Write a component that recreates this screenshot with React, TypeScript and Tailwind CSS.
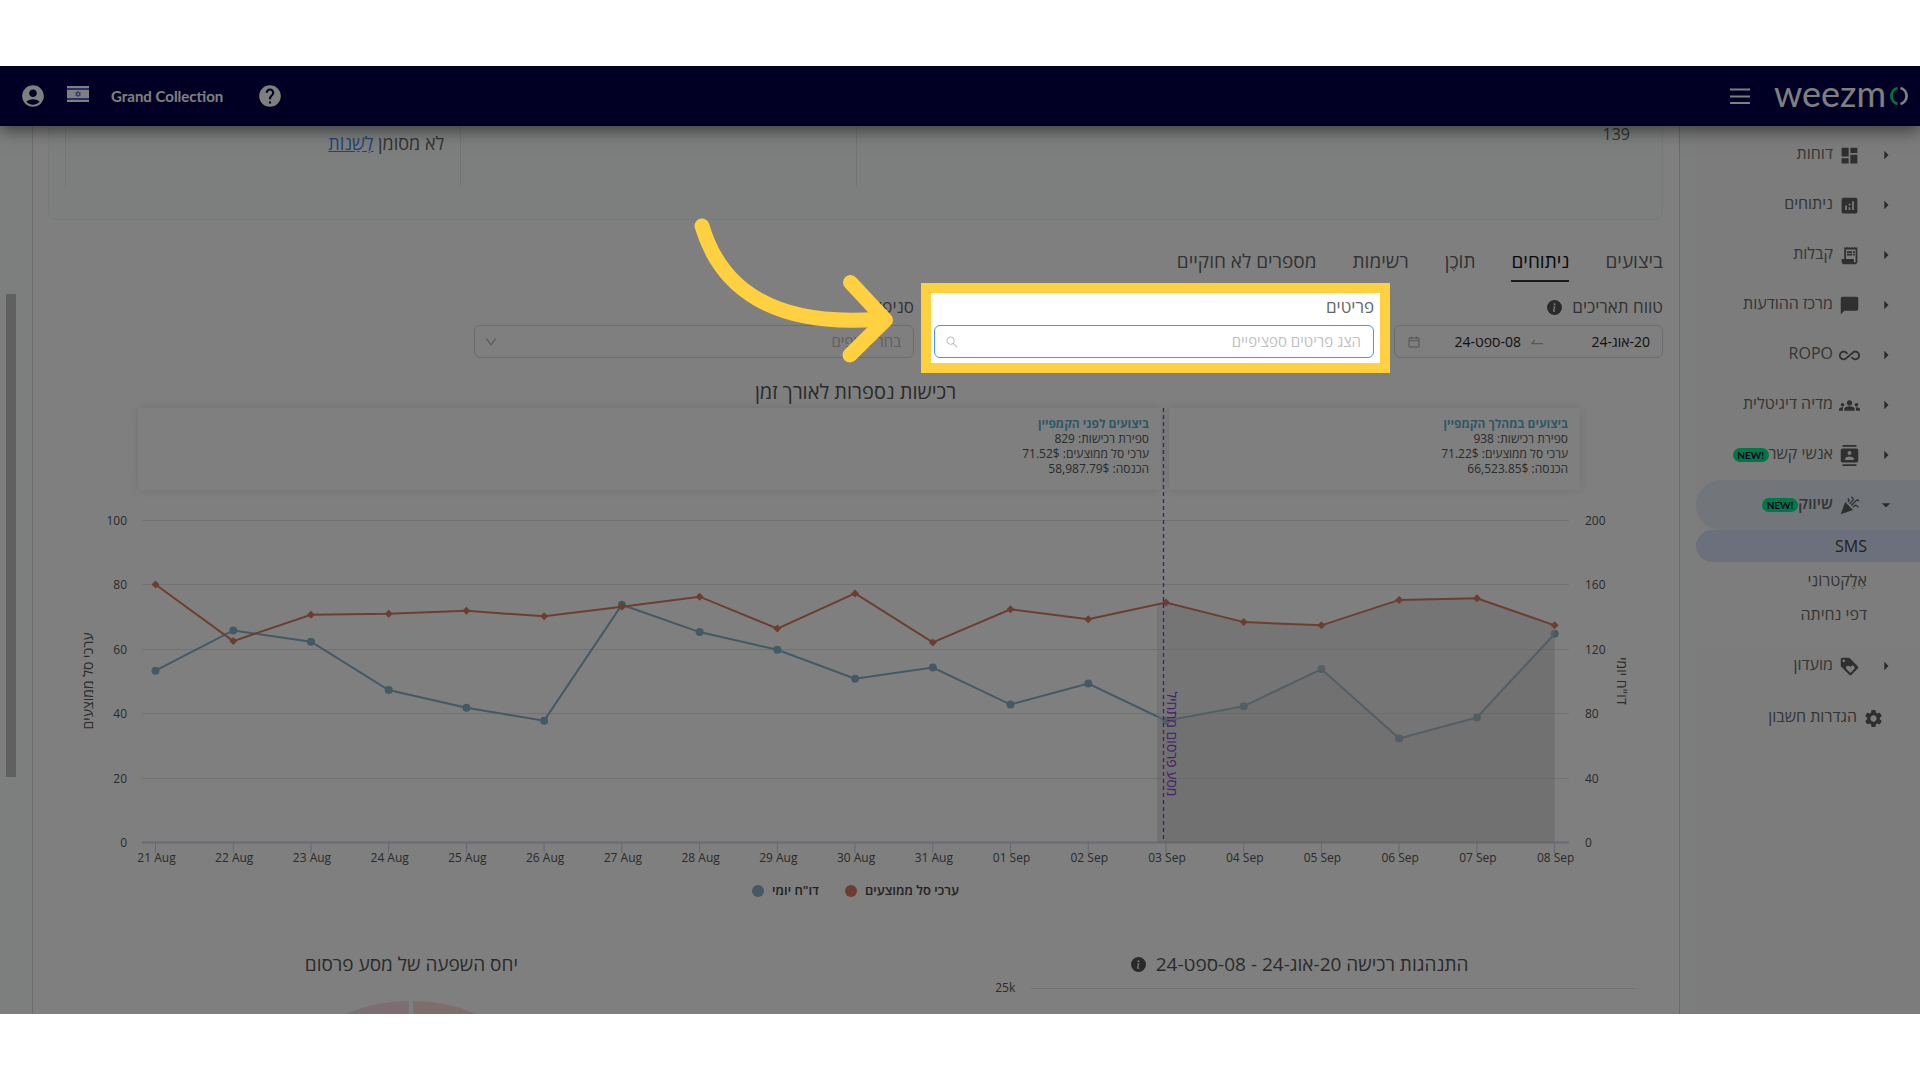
import React from "react";
import {
  MdAccountCircle,
  MdAllInclusive,
  MdAnalytics,
  MdArrowDropDown,
  MdArrowRight,
  MdCelebration,
  MdChatBubble,
  MdContacts,
  MdDashboard,
  MdGroups,
  MdHelp,
  MdLoyalty,
  MdReceiptLong,
  MdSettings,
} from "react-icons/md";
import { AiOutlineCalendar, AiOutlineDown, AiOutlineSearch, AiOutlineSwapRight } from "react-icons/ai";
import { BsInfoCircleFill } from "react-icons/bs";

const menu = [
  { label: "דוחות", icon: MdDashboard },
  { label: "ניתוחים", icon: MdAnalytics },
  { label: "קבלות", icon: MdReceiptLong },
  { label: "מרכז ההודעות", icon: MdChatBubble },
  { label: "ROPO", icon: MdAllInclusive },
  { label: "מדיה דיגיטלית", icon: MdGroups },
  { label: "אנשי קשר", icon: MdContacts, isNew: true },
  { label: "שיווק", icon: MdCelebration, isNew: true, open: true },
  { label: "מועדון", icon: MdLoyalty },
];

const subMenu = [
  { label: "SMS", active: true },
  { label: "אֶלֶקטרוֹנִי" },
  { label: "דפי נחיתה" },
];

const tabs = ["ביצועים", "ניתוחים", "תוֹכֶן", "רשימות", "מספרים לא חוקיים"];

const days = [
  { day: "21 Aug", basket: 80.3, count: 107 },
  { day: "22 Aug", basket: 62.7, count: 132 },
  { day: "23 Aug", basket: 70.9, count: 125 },
  { day: "24 Aug", basket: 71.2, count: 95 },
  { day: "25 Aug", basket: 72.1, count: 84 },
  { day: "26 Aug", basket: 70.4, count: 76 },
  { day: "27 Aug", basket: 73.4, count: 148 },
  { day: "28 Aug", basket: 76.5, count: 131 },
  { day: "29 Aug", basket: 66.6, count: 120 },
  { day: "30 Aug", basket: 77.5, count: 102 },
  { day: "31 Aug", basket: 62.3, count: 109 },
  { day: "01 Sep", basket: 72.6, count: 86 },
  { day: "02 Sep", basket: 69.5, count: 99 },
  { day: "03 Sep", basket: 74.7, count: 76 },
  { day: "04 Sep", basket: 68.6, count: 85 },
  { day: "05 Sep", basket: 67.6, count: 108 },
  { day: "06 Sep", basket: 75.5, count: 65 },
  { day: "07 Sep", basket: 76, count: 78 },
  { day: "08 Sep", basket: 67.6, count: 130 },
];

const CAMPAIGN_START = 13;
const BASE_Y = 353;
const dayX = (i: number) => 107.5 + i * 77.73;
const basketY = (v: number) => BASE_Y - v * 3.22;
const countY = (v: number) => BASE_Y - v * 1.61;

const basketPoints = days.map((d, i) => `${dayX(i)},${basketY(d.basket)}`);
const countPoints = days.map((d, i) => `${dayX(i)},${countY(d.count)}`);

// the shaded part starts a little before the first campaign day
const shade = (points: string[], firstY: number) =>
  `1109,${BASE_Y} 1109,${firstY} ${points.slice(CAMPAIGN_START).join(" ")} ${dayX(18)},${BASE_Y}`;

function NewBadge() {
  return (
    <span className="flex h-3.5 w-9 items-center justify-center rounded-full bg-[#00f08a] font-['Lato',sans-serif] text-[10px] font-bold text-[#06004a]" dir="ltr">
      NEW!
    </span>
  );
}

function Header() {
  return (
    <header dir="ltr" className="relative z-10 flex h-[60px] shrink-0 items-center justify-between bg-[#030048] pr-2.5 pl-5 text-white shadow-[0_4px_16px_rgba(0,0,0,0.55)]">
      <div className="flex items-center">
        <button aria-label="חשבון">
          <MdAccountCircle className="size-[26px]" />
        </button>
        <svg viewBox="0 0 22 16" className="ml-[21px] mb-1 h-4 w-[22px]">
          <rect width="22" height="16" fill="#fff" />
          <rect y="2" width="22" height="2" fill="#4a5fd8" />
          <rect y="12" width="22" height="2" fill="#4a5fd8" />
          <path d="M11 5.2 13.4 9.3H8.6ZM11 10.8 8.6 6.7h4.8Z" fill="none" stroke="#4a5fd8" strokeWidth="0.8" />
        </svg>
        <span className="ml-[22px] font-['Lato',sans-serif] text-[15px] font-bold">Grand Collection</span>
        <button aria-label="עזרה" className="ml-[34px]">
          <MdHelp className="size-[26px]" />
        </button>
      </div>
      <div className="flex items-center">
        <button aria-label="תפריט">
          <svg viewBox="0 0 20 16" className="h-4 w-5" stroke="currentColor" strokeWidth="1.8">
            <path d="M0 1.5h20M0 8.5h20M0 15h20" />
          </svg>
        </button>
        <a href="#home" className="ml-6 flex items-center">
          <span className="mb-1.5 font-['Lato',sans-serif] text-[36px] leading-9">weezm</span>
          <svg viewBox="0 0 20 18" className="ml-0.5 h-[18px] w-[22px] overflow-visible" fill="none" strokeWidth="2.8">
            <path d="M8.500 1A8.3 8.3 0 0 0 8.500 17" stroke="#00e887" />
            <path d="M11.500 1A8.3 8.3 0 0 1 11.500 17" stroke="currentColor" />
          </svg>
        </a>
      </div>
    </header>
  );
}

function Sidebar() {
  return (
    <aside className="w-[241px] shrink-0 border-l border-[#d0d6d4] bg-[#f8fcfa] text-base text-[#6b6b6b]">
      <nav className="me-4 h-full bg-[#f8f8f8] pt-1">
        {menu.map((item) => (
          <div key={item.label}>
            <button
              className={`flex h-[50px] w-full items-center ps-6 ${item.open ? "rounded-l-full bg-[#e4eaf5] font-semibold" : ""}`}
            >
              {item.open ? <MdArrowDropDown className="size-5 text-[#555]" /> : <MdArrowRight className="size-5 text-[#555]" />}
              <item.icon className="ms-4 size-[21px] text-[#5e5e5e]" />
              <span className="ms-1.5 mb-1">{item.label}</span>
              {item.isNew && <NewBadge />}
            </button>
            {item.open && (
              <div className="flex flex-col gap-0.5 bg-[#fbfbfb] pb-[11px]">
                {subMenu.map((sub) => (
                  <a
                    key={sub.label}
                    href="#sub"
                    className={`flex h-8 items-center ps-[53px] ${sub.active ? "rounded-l-full bg-[#d8e0f8] text-[#444]" : ""}`}
                  >
                    {sub.label}
                  </a>
                ))}
              </div>
            )}
          </div>
        ))}
        <button className="mt-0.5 flex h-[50px] w-full items-center ps-9">
          <MdSettings className="size-[21px] text-[#5e5e5e]" />
          <span className="ms-1.5 mb-1">הגדרות חשבון</span>
        </button>
      </nav>
    </aside>
  );
}

function Filters() {
  return (
    <div className="mt-[11px] grid grid-cols-[269fr_440fr_440fr_406fr] gap-5">
      <div>
        <label htmlFor="from" className="flex h-7 items-center gap-2.5 text-[17px] text-[#666]">
          טווח תאריכים
          <BsInfoCircleFill className="size-[15px] text-[#555]" />
        </label>
        <div className="mt-1 flex h-[33px] items-center rounded-md border border-[#d9d9d9] px-3 text-sm text-[#222]">
          <input id="from" defaultValue="20-אוג-24" className="w-[105px] outline-none" />
          <AiOutlineSwapRight className="size-4 shrink-0 -scale-x-100 text-[#aaa]" />
          <input aria-label="עד תאריך" defaultValue="08-ספט-24" className="ms-2 w-0 flex-1 outline-none" />
          <AiOutlineCalendar className="size-3.5 text-[#aaa]" />
        </div>
      </div>

      <div className="relative">
        <label htmlFor="items" className="flex h-7 items-center text-[17px] text-[#666]">פריטים</label>
        <div className="mt-1 flex h-[33px] items-center rounded-md border border-[#4a90ff] ps-3 pe-2.5">
          <input id="items" placeholder="הצג פריטים ספציפיים" className="w-0 flex-1 text-[15px] outline-none placeholder:text-[#bfbfbf]" />
          <AiOutlineSearch className="size-3.5 text-[#bfbfbf]" />
        </div>
        <Spotlight />
      </div>

      <div>
        <label htmlFor="branches" className="flex h-7 items-center text-[17px] text-[#666]">סניפים</label>
        <div className="relative mt-1">
          <select id="branches" className="h-[33px] w-full appearance-none rounded-md border border-[#d9d9d9] px-3 text-[15px] text-[#bfbfbf]">
            <option>בחר סניפים</option>
          </select>
          <AiOutlineDown className="pointer-events-none absolute top-2.5 left-2.5 size-3.5 text-[#aaa]" />
        </div>
      </div>
    </div>
  );
}

// dims everything around the focused field and points at it
function Spotlight() {
  return (
    <div className="pointer-events-none absolute -top-2.5 -right-4 -bottom-[15px] -left-[13px] z-50 border-10 border-[#ffd140] shadow-[0_0_0_3000px_rgba(0,0,0,0.5)]">
      <svg
        viewBox="693 217 200 150"
        className="absolute -top-[76px] right-[calc(100%+38px)] h-[150px] w-[200px]"
        fill="none"
        stroke="#ffd140"
        strokeWidth="15"
        strokeLinecap="round"
        strokeLinejoin="round"
      >
        <path d="M702 226C720 287 772 328 880 319" />
        <path d="M850.500 282.500 885.500 320 850 355" />
      </svg>
    </div>
  );
}

function Summary({ title, count, basket, income }: { title: string; count: string; basket: string; income: string }) {
  return (
    <div className="h-[82px] bg-white px-3 pt-2 text-xs leading-[15px] text-[#555] shadow-[0_0_10px_rgba(0,0,0,0.12)]">
      <p className="font-bold text-[#5cb0cf]">{title}</p>
      <p>ספירת רכישות: {count}</p>
      <p>ערכי סל ממוצעים: {basket}</p>
      <p>הכנסה: {income}</p>
    </div>
  );
}

function PurchasesChart() {
  return (
    <section>
      <h2 className="mt-5 flex h-7 items-center justify-center text-xl text-[#555]">רכישות נספרות לאורך זמן</h2>
      <div className="mt-0.5 grid grid-cols-[411fr_1023fr] gap-2 pr-[83px] pl-[90px]">
        <Summary title="ביצועים במהלך הקמפיין" count="938" basket="71.22$" income="66,523.85$" />
        <Summary title="ביצועים לפני הקמפיין" count="829" basket="71.52$" income="58,987.79$" />
      </div>
      <svg viewBox="0 0 1615 386" direction="ltr" className="relative block w-full overflow-visible text-xs">
        {[0, 1, 2, 3, 4, 5].map((n) => (
          <g key={n} fill="#555">
            <path d={`M94 ${Math.round(basketY(n * 20)) - 0.5}H1521`} stroke={n ? "#e3e3e3" : "#d4d6e4"} strokeWidth={n ? 1 : 2} />
            <text x="79" y={basketY(n * 20) + 4} textAnchor="end">{n * 20}</text>
            <text x="1537" y={basketY(n * 20) + 4}>{n * 40}</text>
          </g>
        ))}
        {days.map((d, i) => (
          <g key={d.day}>
            <path d={`M${dayX(i)} ${BASE_Y}v10`} stroke="#ccd0e4" />
            <text x={dayX(i) + 1} y="372" textAnchor="middle" fill="#555">{d.day}</text>
          </g>
        ))}

        <polyline points={countPoints.join(" ")} fill="none" stroke="#88b2c6" strokeWidth="2" />
        {days.map((d, i) => (
          <circle key={d.day} cx={dayX(i)} cy={countY(d.count)} r="4" fill="#88b2c6" />
        ))}
        <polygon points={shade(countPoints, 228)} fill="#000" fillOpacity="0.06" />
        <polygon points={shade(basketPoints, 114)} fill="#d0d0d0" fillOpacity="0.45" />
        <polyline points={basketPoints.join(" ")} fill="none" stroke="#d87c60" strokeWidth="2" />
        {days.map((d, i) => (
          <path key={d.day} d={`M${dayX(i)} ${basketY(d.basket) - 4}l4 4-4 4-4-4z`} fill="#d87c60" />
        ))}

        <path d="M1115.500 -82V351" stroke="#8a3fd8" strokeWidth="1.3" strokeDasharray="4 3" />
        <g className="text-sm" textAnchor="middle" fill="#555">
          <text transform="translate(1119 254) rotate(90)" fill="#8a3fd8">מסע פרסום מתחיל</text>
          <text transform="translate(45 191) rotate(-90)">ערכי סל ממוצעים</text>
          <text transform="translate(1569 191) rotate(90)">דו"ח יומי</text>
        </g>
      </svg>
      <div dir="ltr" className="flex h-[30px] items-center justify-center gap-[26px] text-[13px] font-semibold text-[#444]">
        <span className="flex items-center gap-2">
          <i className="size-3 rounded-full bg-[#88b2c6]" />
          דו"ח יומי
        </span>
        <span className="flex items-center gap-2">
          <i className="size-3 rounded-full bg-[#d87c60]" />
          ערכי סל ממוצעים
        </span>
      </div>
    </section>
  );
}

function BottomCharts() {
  return (
    <div className="mt-11 flex justify-between">
      <section className="w-[45%]">
        <h2 className="flex h-7 items-center justify-center gap-2.5 text-[19px] text-[#555]">
          התנהגות רכישה 20-אוג-24 - 08-ספט-24
          <BsInfoCircleFill className="size-[15px]" />
        </h2>
        <div dir="ltr" className="flex h-5 items-center pr-7 pl-[59px] text-xs text-[#555]">
          25k
          <span className="ml-4 h-px flex-1 bg-[#e3e3e3]" />
        </div>
      </section>
      <section className="w-[45%]">
        <h2 className="flex h-7 items-center justify-center text-[19px] text-[#555]">יחס השפעה של מסע פרסום</h2>
        <svg viewBox="0 0 320 320" className="mx-auto mt-[23px] w-80">
          <path d="M158 0A160 160 0 0 0 158 320Z" fill="#fadcea" />
          <path d="M162 0A160 160 0 0 1 162 320Z" fill="#fbdcd6" />
        </svg>
      </section>
    </div>
  );
}

export default function App() {
  return (
    <div className="min-h-screen bg-white py-[66px] font-['Open_Sans','Noto_Sans',sans-serif]">
      <div dir="rtl" className="flex h-[calc(100vh-132px)] flex-col overflow-hidden">
        <Header />
        <div className="flex min-h-0 flex-1">
          <Sidebar />
          <main className="flex min-w-0 flex-1 bg-[#f8fefb]">
            <div className="min-w-0 flex-1 border-l border-[#dcdcdc] bg-white ps-4 pe-[15px]">
              <div className="grid grid-cols-[2fr_1fr_1fr] rounded-b-lg border border-t-0 border-[#eef5f2] bg-[#f9fefc] px-4 pb-8 text-[#666]">
                <div className="h-[61px] border-l border-[#e6e9e8] px-4 leading-4">139</div>
                <div className="border-l border-[#e6e9e8]" />
                <div className="border-l border-[#e6e9e8] px-4 pt-2 text-lg leading-[18px]">
                  לא מסומן <a href="#change" className="text-[#4a86f0] underline">לְשַׁנוֹת</a>
                </div>
              </div>

              <div role="tablist" className="mt-5 flex gap-9 text-[19px] text-[#666]">
                {tabs.map((tab, i) => (
                  <button
                    key={tab}
                    role="tab"
                    aria-selected={i === 1}
                    className={`h-[42px] border-b-2 pt-0.5 ${i === 1 ? "border-[#333] font-medium text-[#111]" : "border-transparent"}`}
                  >
                    {tab}
                  </button>
                ))}
              </div>

              <Filters />
              <PurchasesChart />
              <BottomCharts />
            </div>
            <div className="flex w-8 shrink-0 justify-end pt-[168px] pl-1.5">
              <div className="h-[483px] w-2.5 bg-[#c1c1c1]" />
            </div>
          </main>
        </div>
      </div>
    </div>
  );
}
